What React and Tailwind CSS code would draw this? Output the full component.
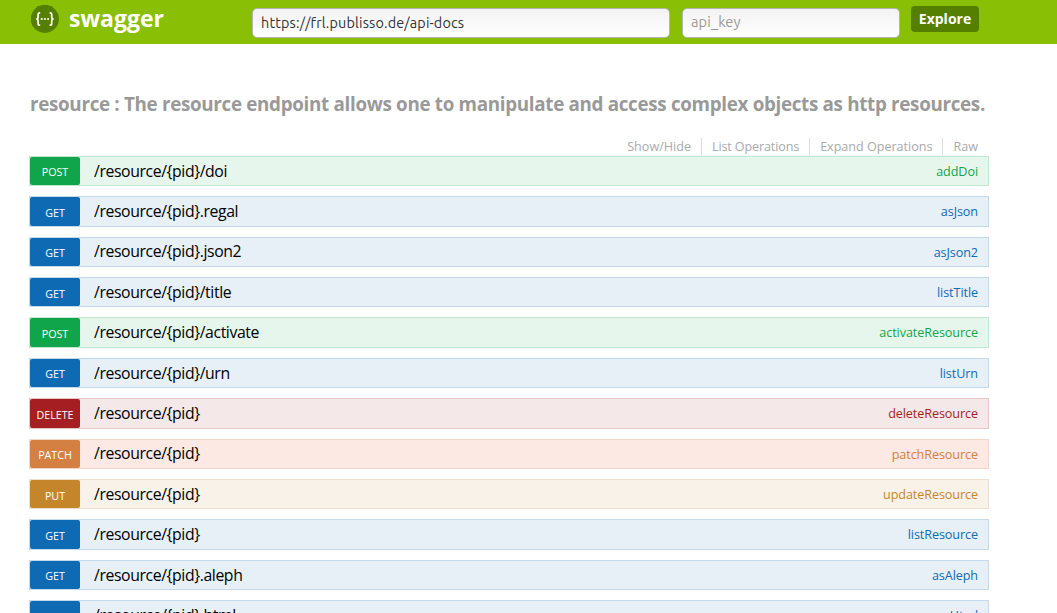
const THEMES = {
  POST: { row: "bg-[#e7f6ec] border-[#c3e8d1]", badge: "bg-[#10a54a]", text: "text-[#10a54a]" },
  GET: { row: "bg-[#e7f0f7] border-[#c3d9ec]", badge: "bg-[#0f6ab4]", text: "text-[#0f6ab4]" },
  DELETE: { row: "bg-[#f5e8e8] border-[#e8c6c7]", badge: "bg-[#a41e22]", text: "text-[#a41e22]" },
  PATCH: { row: "bg-[#fce9e3] border-[#f5d5c3]", badge: "bg-[#d38042]", text: "text-[#d38042]" },
  PUT: { row: "bg-[#f9f2e9] border-[#f0e0ca]", badge: "bg-[#c5862b]", text: "text-[#c5862b]" },
};

const OPERATIONS = [
  ["POST", "/resource/{pid}/doi", "addDoi"],
  ["GET", "/resource/{pid}.regal", "asJson"],
  ["GET", "/resource/{pid}.json2", "asJson2"],
  ["GET", "/resource/{pid}/title", "listTitle"],
  ["POST", "/resource/{pid}/activate", "activateResource"],
  ["GET", "/resource/{pid}/urn", "listUrn"],
  ["DELETE", "/resource/{pid}", "deleteResource"],
  ["PATCH", "/resource/{pid}", "patchResource"],
  ["PUT", "/resource/{pid}", "updateResource"],
  ["GET", "/resource/{pid}", "listResource"],
  ["GET", "/resource/{pid}.aleph", "asAleph"],
  ["GET", "/resource/{pid}.html", "asHtml"],
];

function Logo() {
  return (
    <svg className="h-[29px] w-[29px] shrink-0" viewBox="0 0 29 29" fill="none">
      <circle cx="13.8" cy="13.9" r="14.1" fill="#547f00" />
      <g stroke="#fff" strokeWidth="1.7">
        <path d="M9.200 7.800H8.800c-1.300 0-1.700.6-1.700 1.800v2.300c0 1.300-.6 2-1.900 2.100 1.300.1 1.900.8 1.900 2.100v2.300c0 1.200.4 1.800 1.700 1.800h.4" />
        <path d="M18.600 7.800h.4c1.300 0 1.700.6 1.700 1.800v2.300c0 1.300.6 2 1.900 2.100-1.300.1-1.900.8-1.900 2.100v2.300c0 1.200-.4 1.800-1.700 1.800h-.4" />
      </g>
      <g fill="#fff">
        <circle cx="10.700" cy="14" r="1.050" />
        <circle cx="13.900" cy="14" r="1.050" />
        <circle cx="17.100" cy="14" r="1.050" />
      </g>
    </svg>
  );
}

function Operation({ method, path, name }) {
  const theme = THEMES[method];
  return (
    <li className={`flex h-[30.4px] items-start border ${theme.row}`}>
      <span className={`h-[28.4px] w-[50px] shrink-0 rounded-[2px] pt-[1.700px] text-center text-[10.700px] leading-[28px] text-white ${theme.badge}`}>
        {method}
      </span>
      <span className="pt-[0.800px] pl-[14px] text-[15.800px] leading-[27px] tracking-[-0.400px] text-black">{path}</span>
      <span className={`ml-auto pt-[1.100px] pr-[10px] text-[12.600px] leading-[28px] tracking-[-0.080px] ${theme.text}`}>{name}</span>
    </li>
  );
}

const FIELD =
  "h-[30px] rounded-[5px] border border-[#b4b4b4] bg-linear-to-b from-[#f3f3f3] to-white px-2 font-[Ubuntu,'Noto_Sans',sans-serif] text-[#333] outline-none placeholder:text-[#999] placeholder:opacity-100";

export default function App() {
  return (
    <div className="h-[613px] overflow-hidden bg-white font-['Open_Sans','Noto_Sans',sans-serif]">
      <header className="flex h-[44px] items-start bg-[#89bf04] pl-[31px]">
        <div className="flex w-[221px] items-start pt-[5px]">
          <Logo />
          <span className="-mt-px pl-[9px] text-[23px] leading-[28px] font-bold text-white">swagger</span>
        </div>
        <input className={`${FIELD} mt-2 w-[418px] text-[14.400px] tracking-[0.160px]`} defaultValue="https://frl.publisso.de/api-docs" />
        <input className={`${FIELD} mt-2 ml-3 w-[218px] pb-[3px] text-[14.600px] tracking-[0.100px]`} placeholder="api_key" />
        <button className="mt-[6px] ml-[11px] h-[26px] w-[68px] rounded-[4px] bg-[#547f00] text-[14px] leading-[26px] font-bold text-white">
          Explore
        </button>
      </header>
      <main className="ml-[29px] w-[960px] pt-[46px]">
        <h2 className="pl-px text-[18.800px] leading-[28px] font-bold tracking-[-0.305px] whitespace-nowrap text-[#999]">
          resource : The resource endpoint allows one to manipulate and access complex objects as http resources.
        </h2>
        <nav className="mt-[20px] flex h-[17.800px] justify-end text-[12.600px] leading-[17px] text-[#aaa]">
          <a className="h-[17px] border-r border-[#ddd] px-[10px]">Show/Hide</a>
          <a className="h-[17px] border-r border-[#ddd] px-[10px] tracking-[-0.140px]">List Operations</a>
          <a className="h-[17px] border-r border-[#ddd] px-[10px] tracking-[-0.020px]">Expand Operations</a>
          <a className="h-[17px] pr-[11px] pl-[10px]">Raw</a>
        </nav>
        <ul className="flex flex-col gap-[10px]">
          {OPERATIONS.map(([method, path, name]) => (
            <Operation key={name} method={method} path={path} name={name} />
          ))}
        </ul>
      </main>
    </div>
  );
}
